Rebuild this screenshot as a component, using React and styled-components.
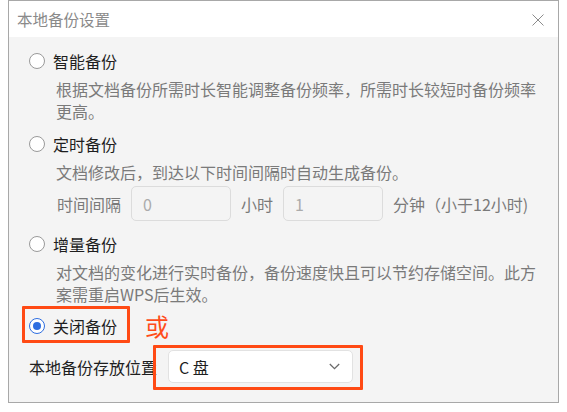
import React from 'react';
import styled, { createGlobalStyle } from 'styled-components';

const GlobalStyle = createGlobalStyle`
  html, body {
    margin: 0;
    padding: 0;
    background: #ffffff;
  }
  body {
    font-family: "Noto Sans CJK SC", "Noto Sans", sans-serif;
  }
`;

const Dialog = styled.div`
  box-sizing: border-box;
  width: 551px;
  height: 403px;
  margin-left: 8px;
  border: 1px solid #a8a8a8;
  display: flex;
  flex-direction: column;
  background: #f4f4f4;
`;

const TitleBar = styled.div`
  height: 36px;
  flex: none;
  display: flex;
  align-items: center;
  justify-content: space-between;
  padding: 0 14px 0 8px;
  background: #ffffff;
`;

const Title = styled.div`
  font-size: 15.5px;
  line-height: 20px;
  color: #8a8a8a;
`;

const CloseButton = styled.button`
  border: none;
  background: transparent;
  padding: 0;
  width: 12px;
  height: 12px;
  display: flex;
  margin-top: 2px;
`;

const Body = styled.div`
  flex: 1;
  display: flex;
  flex-direction: column;
  padding: 12px 0 0 20px;
`;

const RadioRow = styled.div`
  display: flex;
  align-items: center;
  height: 24px;
  margin-top: ${({ $mt }) => $mt || 0}px;
`;

const Radio = styled.span`
  box-sizing: border-box;
  width: 16px;
  height: 16px;
  border-radius: 50%;
  border: 1px solid ${({ $checked }) => ($checked ? '#2e6ee0' : '#9a9a9a')};
  background: #ffffff;
  display: flex;
  align-items: center;
  justify-content: center;
  flex: none;

  &::after {
    content: '';
    display: ${({ $checked }) => ($checked ? 'block' : 'none')};
    width: 8px;
    height: 8px;
    border-radius: 50%;
    background: #2e6ee0;
  }
`;

const Label = styled.span`
  margin-left: 8px;
  font-size: 16px;
  line-height: 24px;
  color: #1e1e1e;
`;

const Desc = styled.div`
  width: 488px;
  margin: 5px 0 0 27px;
  font-size: 16px;
  line-height: 22px;
  color: #7a7a7a;
`;

const IntervalRow = styled.div`
  display: flex;
  align-items: center;
  gap: 10px;
  margin: 3px 0 0 28px;
  font-size: 16px;
  color: #7a7a7a;
`;

const NumberBox = styled.div`
  box-sizing: border-box;
  width: 100px;
  height: 35px;
  border: 1px solid #dcdcdc;
  border-radius: 5px;
  padding: 0 11px;
  display: flex;
  align-items: center;
  color: #ababab;
  font-size: 16px;
`;

const Unit = styled.span`
  margin-right: ${({ $mr }) => $mr || 0}px;
`;

const CloseRow = styled.div`
  display: flex;
  align-items: center;
  margin-top: 9px;
`;

const Marked = styled.div`
  position: relative;
  display: flex;
  align-items: center;

  &::after {
    content: '';
    position: absolute;
    top: ${({ $box }) => $box[0]}px;
    right: ${({ $box }) => $box[1]}px;
    bottom: ${({ $box }) => $box[2]}px;
    left: ${({ $box }) => $box[3]}px;
    border: 3px solid #ff4a14;
    border-radius: 1px;
    pointer-events: none;
  }
`;

const Or = styled.span`
  margin-left: 28px;
  font-size: 24px;
  line-height: 24px;
  color: #ff4d1a;
`;

const LocationRow = styled.div`
  display: flex;
  align-items: center;
  margin-top: 12px;
`;

const LocationLabel = styled.span`
  font-size: 16px;
  line-height: 24px;
  color: #1e1e1e;
  margin-right: 11px;
`;

const Select = styled.div`
  box-sizing: border-box;
  width: 185px;
  height: 33px;
  background: #ffffff;
  border: 1px solid #e2e2e2;
  border-radius: 5px;
  padding: 0 12px 0 10px;
  display: flex;
  align-items: center;
  justify-content: space-between;
  font-size: 16px;
  color: #1e1e1e;
`;

const CloseIcon = () => (
  <svg width="12" height="12" viewBox="0 0 12 12">
    <path d="M0.5 0.5 L11.5 11.5 M11.5 0.5 L0.5 11.5" stroke="#8c8c8c" strokeWidth="1" fill="none" />
  </svg>
);

const Chevron = () => (
  <svg width="11" height="7" viewBox="0 0 11 7">
    <path d="M0.8 1 L5.5 5.6 L10.2 1" stroke="#6a6a6a" strokeWidth="1.3" fill="none" />
  </svg>
);

const App = () => {
  return (
    <>
      <GlobalStyle />
      <Dialog>
        <TitleBar>
          <Title>本地备份设置</Title>
          <CloseButton aria-label="关闭">
            <CloseIcon />
          </CloseButton>
        </TitleBar>
        <Body>
          <RadioRow>
            <Radio />
            <Label>智能备份</Label>
          </RadioRow>
          <Desc>根据文档备份所需时长智能调整备份频率，所需时长较短时备份频率更高。</Desc>

          <RadioRow $mt={10}>
            <Radio />
            <Label>定时备份</Label>
          </RadioRow>
          <Desc>文档修改后，到达以下时间间隔时自动生成备份。</Desc>
          <IntervalRow>
            <Unit>时间间隔</Unit>
            <NumberBox>0</NumberBox>
            <Unit>小时</Unit>
            <NumberBox>1</NumberBox>
            <Unit>分钟（小于12小时)</Unit>
          </IntervalRow>

          <RadioRow $mt={11}>
            <Radio />
            <Label>增量备份</Label>
          </RadioRow>
          <Desc>对文档的变化进行实时备份，备份速度快且可以节约存储空间。此方案需重启WPS后生效。</Desc>

          <CloseRow>
            <Marked $box={[-8, -13, -5, -7]}>
              <RadioRow>
                <Radio $checked />
                <Label>关闭备份</Label>
              </RadioRow>
            </Marked>
            <Or>或</Or>
          </CloseRow>

          <LocationRow>
            <LocationLabel>本地备份存放位置</LocationLabel>
            <Marked $box={[-5, -10, -7, -15]}>
              <Select>
                <span>C 盘</span>
                <Chevron />
              </Select>
            </Marked>
          </LocationRow>
        </Body>
      </Dialog>
    </>
  );
};

export default App;
